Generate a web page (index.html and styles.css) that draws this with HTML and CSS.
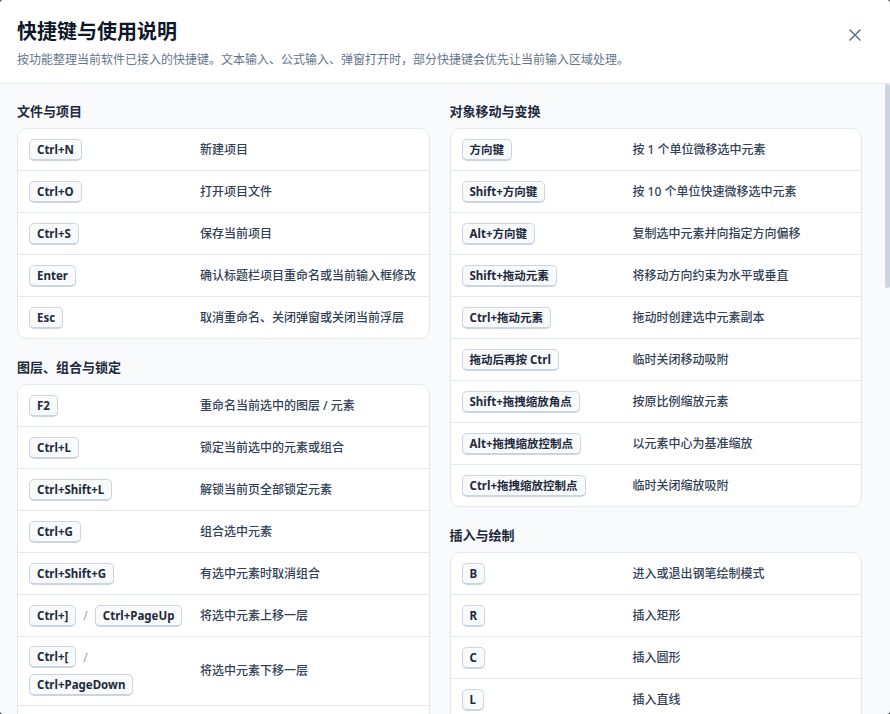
FILE: index.html
```html
<!DOCTYPE html>
<html lang="zh-CN">
<head>
<meta charset="utf-8">
<title>快捷键与使用说明</title>
<link rel="stylesheet" href="styles.css">
</head>
<body>
<div class="dialog" role="dialog" aria-labelledby="dlg-title">
  <header class="dialog-head">
    <div class="head-text">
      <h1 id="dlg-title" class="dialog-title">快捷键与使用说明</h1>
      <p class="dialog-sub">按功能整理当前软件已接入的快捷键。文本输入、公式输入、弹窗打开时，部分快捷键会优先让当前输入区域处理。</p>
    </div>
    <button class="close-btn" aria-label="关闭">
      <svg width="14" height="14" viewBox="0 0 14 14"><path d="M2 2 L12 12 M12 2 L2 12" stroke="currentColor" stroke-width="1.6" stroke-linecap="round" fill="none"/></svg>
    </button>
  </header>

  <div class="dialog-body">
    <div class="columns">
      <div class="col">
        <section class="group">
          <h2 class="group-title">文件与项目</h2>
          <div class="card">
            <div class="row"><div class="keys"><kbd>Ctrl+N</kbd></div><div class="desc">新建项目</div></div>
            <div class="row"><div class="keys"><kbd>Ctrl+O</kbd></div><div class="desc">打开项目文件</div></div>
            <div class="row"><div class="keys"><kbd>Ctrl+S</kbd></div><div class="desc">保存当前项目</div></div>
            <div class="row"><div class="keys"><kbd>Enter</kbd></div><div class="desc">确认标题栏项目重命名或当前输入框修改</div></div>
            <div class="row"><div class="keys"><kbd>Esc</kbd></div><div class="desc">取消重命名、关闭弹窗或关闭当前浮层</div></div>
          </div>
        </section>

        <section class="group">
          <h2 class="group-title">图层、组合与锁定</h2>
          <div class="card">
            <div class="row"><div class="keys"><kbd>F2</kbd></div><div class="desc">重命名当前选中的图层 / 元素</div></div>
            <div class="row"><div class="keys"><kbd>Ctrl+L</kbd></div><div class="desc">锁定当前选中的元素或组合</div></div>
            <div class="row"><div class="keys"><kbd>Ctrl+Shift+L</kbd></div><div class="desc">解锁当前页全部锁定元素</div></div>
            <div class="row"><div class="keys"><kbd>Ctrl+G</kbd></div><div class="desc">组合选中元素</div></div>
            <div class="row"><div class="keys"><kbd>Ctrl+Shift+G</kbd></div><div class="desc">有选中元素时取消组合</div></div>
            <div class="row"><div class="keys"><kbd>Ctrl+]</kbd><span class="sep">/</span><kbd>Ctrl+PageUp</kbd></div><div class="desc">将选中元素上移一层</div></div>
            <div class="row"><div class="keys"><kbd>Ctrl+[</kbd><span class="sep">/</span><kbd>Ctrl+PageDown</kbd></div><div class="desc">将选中元素下移一层</div></div>
            <div class="row"><div class="keys"><kbd>Ctrl+Shift+]</kbd></div><div class="desc">将选中元素置于顶层</div></div>
            <div class="row"><div class="keys"><kbd>Ctrl+Shift+[</kbd></div><div class="desc">将选中元素置于底层</div></div>
            <div class="row"><div class="keys"><kbd>Ctrl+H</kbd></div><div class="desc">隐藏或显示选中图层</div></div>
          </div>
        </section>

        <section class="group">
          <h2 class="group-title">编辑与剪贴板</h2>
          <div class="card">
            <div class="row"><div class="keys"><kbd>Ctrl+Z</kbd></div><div class="desc">撤销上一步操作</div></div>
            <div class="row"><div class="keys"><kbd>Ctrl+Y</kbd><span class="sep">/</span><kbd>Ctrl+Shift+Z</kbd></div><div class="desc">重做已撤销的操作</div></div>
            <div class="row"><div class="keys"><kbd>Ctrl+C</kbd></div><div class="desc">复制选中元素</div></div>
            <div class="row"><div class="keys"><kbd>Ctrl+X</kbd></div><div class="desc">剪切选中元素</div></div>
            <div class="row"><div class="keys"><kbd>Ctrl+V</kbd></div><div class="desc">粘贴到当前页面</div></div>
            <div class="row"><div class="keys"><kbd>Ctrl+D</kbd></div><div class="desc">原位复制选中元素</div></div>
            <div class="row"><div class="keys"><kbd>Ctrl+A</kbd></div><div class="desc">全选当前页元素</div></div>
            <div class="row"><div class="keys"><kbd>Delete</kbd></div><div class="desc">删除选中元素</div></div>
          </div>
        </section>

        <section class="group">
          <h2 class="group-title">页面与导出</h2>
          <div class="card">
            <div class="row"><div class="keys"><kbd>Ctrl+Shift+N</kbd></div><div class="desc">新建页面</div></div>
            <div class="row"><div class="keys"><kbd>Ctrl+Shift+D</kbd></div><div class="desc">复制当前页面</div></div>
            <div class="row"><div class="keys"><kbd>Ctrl+E</kbd></div><div class="desc">导出当前页面</div></div>
            <div class="row"><div class="keys"><kbd>Ctrl+Shift+E</kbd></div><div class="desc">导出全部页面</div></div>
            <div class="row"><div class="keys"><kbd>Ctrl+P</kbd></div><div class="desc">打印当前项目</div></div>
          </div>
        </section>
      </div>

      <div class="col">
        <section class="group">
          <h2 class="group-title">对象移动与变换</h2>
          <div class="card">
            <div class="row"><div class="keys"><kbd>方向键</kbd></div><div class="desc">按 1 个单位微移选中元素</div></div>
            <div class="row"><div class="keys"><kbd>Shift+方向键</kbd></div><div class="desc">按 10 个单位快速微移选中元素</div></div>
            <div class="row"><div class="keys"><kbd>Alt+方向键</kbd></div><div class="desc">复制选中元素并向指定方向偏移</div></div>
            <div class="row"><div class="keys"><kbd>Shift+拖动元素</kbd></div><div class="desc">将移动方向约束为水平或垂直</div></div>
            <div class="row"><div class="keys"><kbd>Ctrl+拖动元素</kbd></div><div class="desc">拖动时创建选中元素副本</div></div>
            <div class="row"><div class="keys"><kbd>拖动后再按 Ctrl</kbd></div><div class="desc">临时关闭移动吸附</div></div>
            <div class="row"><div class="keys"><kbd>Shift+拖拽缩放角点</kbd></div><div class="desc">按原比例缩放元素</div></div>
            <div class="row"><div class="keys"><kbd>Alt+拖拽缩放控制点</kbd></div><div class="desc">以元素中心为基准缩放</div></div>
            <div class="row"><div class="keys"><kbd>Ctrl+拖拽缩放控制点</kbd></div><div class="desc">临时关闭缩放吸附</div></div>
          </div>
        </section>

        <section class="group">
          <h2 class="group-title">插入与绘制</h2>
          <div class="card">
            <div class="row"><div class="keys"><kbd>B</kbd></div><div class="desc">进入或退出钢笔绘制模式</div></div>
            <div class="row"><div class="keys"><kbd>R</kbd></div><div class="desc">插入矩形</div></div>
            <div class="row"><div class="keys"><kbd>C</kbd></div><div class="desc">插入圆形</div></div>
            <div class="row"><div class="keys"><kbd>L</kbd></div><div class="desc">插入直线</div></div>
            <div class="row"><div class="keys"><kbd>A</kbd></div><div class="desc">插入箭头</div></div>
            <div class="row"><div class="keys"><kbd>T</kbd></div><div class="desc">插入文本框</div></div>
            <div class="row"><div class="keys"><kbd>F</kbd></div><div class="desc">插入公式</div></div>
            <div class="row"><div class="keys"><kbd>I</kbd></div><div class="desc">插入图片</div></div>
          </div>
        </section>

        <section class="group">
          <h2 class="group-title">视图与缩放</h2>
          <div class="card">
            <div class="row"><div class="keys"><kbd>Ctrl+=</kbd></div><div class="desc">放大画布</div></div>
            <div class="row"><div class="keys"><kbd>Ctrl+-</kbd></div><div class="desc">缩小画布</div></div>
            <div class="row"><div class="keys"><kbd>Ctrl+0</kbd></div><div class="desc">缩放至适合窗口</div></div>
            <div class="row"><div class="keys"><kbd>Ctrl+1</kbd></div><div class="desc">缩放至 100%</div></div>
            <div class="row"><div class="keys"><kbd>空格+拖动</kbd></div><div class="desc">临时平移画布</div></div>
            <div class="row"><div class="keys"><kbd>Ctrl+滚轮</kbd></div><div class="desc">以指针位置为中心缩放</div></div>
            <div class="row"><div class="keys"><kbd>Ctrl+'</kbd></div><div class="desc">显示或隐藏网格</div></div>
          </div>
        </section>

        <section class="group">
          <h2 class="group-title">帮助</h2>
          <div class="card">
            <div class="row"><div class="keys"><kbd>F1</kbd></div><div class="desc">打开快捷键与使用说明</div></div>
            <div class="row"><div class="keys"><kbd>Ctrl+/</kbd></div><div class="desc">打开命令搜索</div></div>
          </div>
        </section>
      </div>
    </div>
  </div>

  <div class="scroll-thumb" aria-hidden="true"></div>
</div>
</body>
</html>
```

FILE: styles.css
```css
* {
  box-sizing: border-box;
}

html,
body {
  margin: 0;
  height: 100%;
  background: #475569;
}

body {
  font-family: "Noto Sans", "Noto Sans CJK SC", sans-serif;
  color: #1e293b;
}

.dialog {
  position: relative;
  height: 100%;
  display: flex;
  flex-direction: column;
  background: #ffffff;
  border-radius: 4px;
  overflow: hidden;
}

/* header */
.dialog-head {
  flex: none;
  display: flex;
  align-items: flex-start;
  justify-content: space-between;
  padding: 18px 20px 0 17px;
  height: 84px;
  border-bottom: 1px solid #e2e8f0;
  background: #ffffff;
}

.dialog-title {
  margin: 0;
  font-size: 20px;
  line-height: 28px;
  font-weight: 700;
  color: #0f172a;
}

.dialog-sub {
  margin: 5px 0 0;
  font-size: 12px;
  line-height: 18px;
  color: #64748b;
}

.close-btn {
  margin-top: 2px;
  width: 30px;
  height: 30px;
  display: flex;
  align-items: center;
  justify-content: center;
  border: 0;
  background: transparent;
  color: #64748b;
  border-radius: 6px;
  padding: 0;
  cursor: pointer;
}

/* scrolling body */
.dialog-body {
  flex: 1;
  min-height: 0;
  overflow-y: auto;
  background: #f8fafc;
  padding: 17px 28px 24px 17px;
  scrollbar-width: none;
}

.dialog-body::-webkit-scrollbar {
  display: none;
}

.scroll-thumb {
  position: absolute;
  top: 84px;
  right: 0;
  width: 5px;
  height: 204px;
  background: #cbd5e1;
  border-radius: 3px;
}

.columns {
  display: grid;
  grid-template-columns: 1fr 1fr;
  column-gap: 20px;
  align-items: start;
}

.group + .group {
  margin-top: 18px;
}

.group-title {
  margin: 0 0 7px;
  font-size: 13px;
  line-height: 20px;
  font-weight: 700;
  color: #1e293b;
}

.card {
  background: #ffffff;
  border: 1px solid #e2e8f0;
  border-radius: 10px;
  overflow: hidden;
}

.row {
  display: grid;
  grid-template-columns: 160px 1fr;
  column-gap: 11px;
  align-items: center;
  min-height: 42px;
  padding: 9px 12px 9px 11px;
  border-bottom: 1px solid #e2e8f0;
}

.row:last-child {
  border-bottom: 0;
  min-height: 41px;
}

.keys {
  display: flex;
  flex-wrap: wrap;
  align-items: center;
  gap: 6px;
}

kbd {
  display: inline-block;
  font-family: "Noto Sans", "Noto Sans CJK SC", sans-serif;
  font-size: 11.5px;
  line-height: 14px;
  font-weight: 700;
  color: #1e293b;
  background: #f8fafc;
  border: 1px solid #cbd5e1;
  border-bottom-width: 2px;
  border-radius: 5px;
  padding: 3px 7px 2px;
  white-space: nowrap;
}

.sep {
  font-size: 12px;
  color: #94a3b8;
  padding: 0 1px;
}

.desc {
  font-size: 12px;
  line-height: 18px;
  font-weight: 500;
  color: #334155;
}
```
